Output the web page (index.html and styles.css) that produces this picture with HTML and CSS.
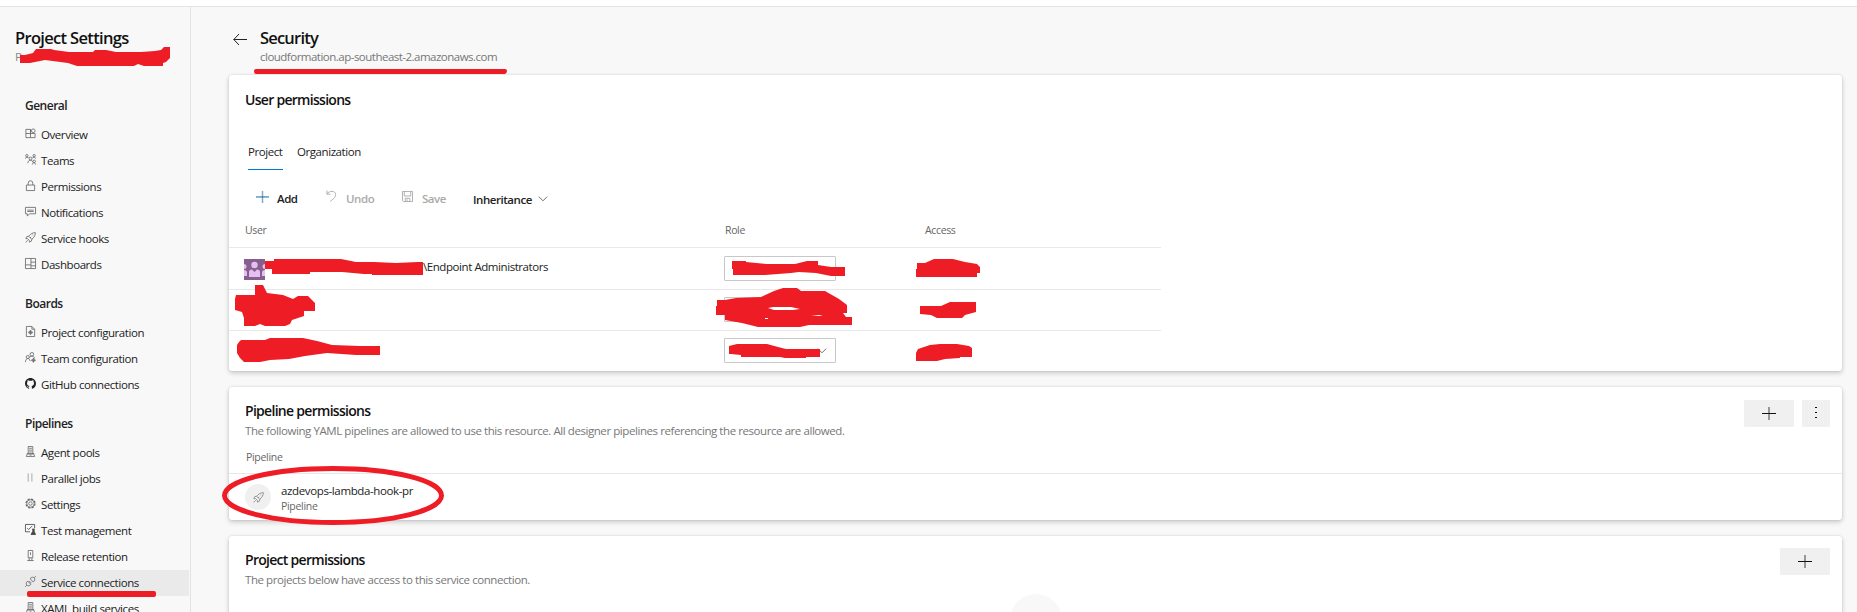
FILE: index.html
```html
<!DOCTYPE html>
<html lang="en">
<head>
<meta charset="utf-8">
<title>Security - Project Settings</title>
<link rel="stylesheet" href="styles.css">
</head>
<body>
<svg class="defs" width="0" height="0">
  <symbol id="i-rocket" viewBox="0 0 12 12"><path d="M11.300.700C8.500.700 6.300 1.900 4 4.600L1.900 5 .9 7.200l2 .1 1.800 1.800.1 2L7 10l.4-2.100C10.100 5.700 11.300 3.500 11.300.700zM3 9l-2.300 2.300M4 4.600 7.400 8M8.200 3l.8.8M5.500 6.500l1.200-1.200"/></symbol>
  <symbol id="i-server" viewBox="0 0 12 12"><path d="M3.500 8.500v-8h5v8M4.500 2.500h3M4.500 4.500h3M4.500 6.500h3M2 8.500h8M1.500 11.500l1-3h7l1 3zM5 10h2"/></symbol>
  <symbol id="i-plus" viewBox="0 0 14 14"><path d="M0 7.500h14"/><path opacity=".5" stroke-width="1.600" d="M7 1v13"/></symbol>
</svg>
<div class="page">
  <div class="topbar"></div>
  <div class="shell">
    <nav class="side">
      <div class="side-title">Project Settings</div>
      <div class="side-sub">P</div>
      <h3>General</h3>
      <a><svg class="ic" viewBox="0 0 12 12"><path d="M1 1.500h5v9H1zM1 6h10v4.500H6M6 1.500v4.500"/><circle cx="9" cy="3" r="2"/></svg><span>Overview</span></a>
      <a><svg class="ic" viewBox="0 0 12 12"><circle cx="2" cy="1.800" r="1.300"/><circle cx="10" cy="1.800" r="1.300"/><circle cx="6" cy="5" r="1.600"/><circle cx="10" cy="8" r="1.400"/><path d="M.5 5c0-2 3-2 3.500-.5M8 4.500C8.500 3 11.500 3 11.500 5M3 10c0-4 5-4 5.500-1M8 11.500c0-2.500 3.500-2.500 3.500 0"/></svg><span>Teams</span></a>
      <a><svg class="ic" viewBox="0 0 12 12"><path d="M1.500 5.500h9v6h-9zM3.500 5.500v-2a2.500 2.700 0 0 1 5 0v2"/></svg><span>Permissions</span></a>
      <a><svg class="ic" viewBox="0 0 12 12"><path d="M.5 1.500h11v7H5l-2.500 2.500v-2.500h-2zM2.500 4.500h7M2.500 6h7"/></svg><span>Notifications</span></a>
      <a><svg class="ic"><use href="#i-rocket"/></svg><span>Service hooks</span></a>
      <a><svg class="ic" viewBox="0 0 12 12"><path d="M.5.5h11v11H.5zM6.500.5v11M.5 7.500h6M6.500 4.500h5M6.500 8.500h5"/></svg><span>Dashboards</span></a>
      <h3>Boards</h3>
      <a><svg class="ic" viewBox="0 0 12 12"><path d="M1.500.5h6l3 3v8h-9zM7.500.5v3h3"/><circle cx="6" cy="7" r="1.700"/><path d="M6 4.500v5M3.500 7h5"/></svg><span>Project configuration</span></a>
      <a><svg class="ic" viewBox="0 0 12 12"><circle cx="7.500" cy="2.500" r="2"/><circle cx="3" cy="5.500" r="1.700"/><circle cx="9.200" cy="9" r="1.500"/><path d="M.5 11c0-5 5-5 5-1M4.500 6c2-2 5.500-2 6 1M9.200 6.500v5M6.700 9h5"/></svg><span>Team configuration</span></a>
      <a><svg class="ic gh" viewBox="0 0 16 16"><path d="M8 0C3.580 0 0 3.580 0 8c0 3.540 2.290 6.530 5.470 7.590.4.070.550-.170.550-.380 0-.190-.010-.820-.010-1.490-2.010.370-2.530-.490-2.690-.940-.090-.230-.480-.940-.820-1.130-.280-.150-.680-.520-.010-.530.630-.010 1.080.580 1.230.820.720 1.210 1.870.870 2.330.660.070-.520.280-.870.510-1.070-1.780-.200-3.640-.890-3.640-3.950 0-.870.310-1.590.820-2.150-.080-.200-.360-1.020.080-2.120 0 0 .670-.210 2.200.820a7.400 7.400 0 0 1 4 0c1.530-1.040 2.200-.820 2.200-.820.440 1.100.160 1.920.080 2.120.510.560.820 1.270.820 2.150 0 3.070-1.870 3.750-3.650 3.950.290.250.540.730.540 1.480 0 1.070-.010 1.930-.010 2.200 0 .210.150.460.550.380A8 8 0 0 0 16 8c0-4.420-3.580-8-8-8z"/></svg><span>GitHub connections</span></a>
      <h3>Pipelines</h3>
      <a><svg class="ic"><use href="#i-server"/></svg><span>Agent pools</span></a>
      <a><svg class="ic bars" viewBox="0 0 12 12"><path d="M3.500 1.500v9M7.500 1.500v9"/></svg><span>Parallel jobs</span></a>
      <a><svg class="ic" viewBox="0 0 12 12"><circle cx="6" cy="6" r="4.900" stroke-dasharray="2.400 1.450" stroke-width="1.300"/><circle cx="6" cy="6" r="4.100"/><circle cx="6" cy="6" r="1.900"/></svg><span>Settings</span></a>
      <a><svg class="ic dark" viewBox="0 0 12 12"><path d="M5.500 8.500h-5v-8h10v4M2.500 4.500l1.500 1.500 4-4"/><path fill="#444" d="M8 5.500h2.500M8.500 5.500v2.500L6.500 11.500h5L10 8V5.500"/></svg><span>Test management</span></a>
      <a><svg class="ic" viewBox="0 0 12 12"><path d="M3.500.5h5v8h-5zM6 2.500v3M2.500 11.500h7M4.500 8.500v3M7.500 8.500v3"/></svg><span>Release retention</span></a>
      <a class="on"><svg class="ic" viewBox="0 0 12 12"><path d="M.2 11.800 2 10M10 2l1.800-1.800M3 5.500 6.500 9C5 11 3.200 11 2 10 1 8.800 1 7 3 5.500zM5.500 3 9 6.500C11 5 11 3.200 10 2 8.800 1 7 1 5.500 3zM4.300 6.800 5.700 5.400M5.500 8 7 6.500"/></svg><span>Service connections</span></a>
      <a><svg class="ic"><use href="#i-server"/></svg><span>XAML build services</span></a>
    </nav>
    <main>
      <header>
        <svg class="back" viewBox="0 0 14 12"><path d="M.8 6.500H14M6 1 .8 6.500 6 12"/></svg>
        <div>
          <h1>Security</h1>
          <p class="url">cloudformation.ap-southeast-2.amazonaws.com</p>
        </div>
      </header>

      <section class="card users">
        <h2>User permissions</h2>
        <div class="tabs"><span class="tab sel">Project</span><span class="tab">Organization</span></div>
        <div class="tools">
          <svg class="add-ic"><use href="#i-plus"/></svg><b class="add">Add</b>
          <svg class="undo-ic" viewBox="0 0 12 13"><path d="M1 .5v4h4M1 4C4 .5 10 .5 10.500 4.500 10.800 8 7.500 10 4.500 12.500"/></svg><b class="undo">Undo</b>
          <svg class="save-ic" viewBox="0 0 12 12"><path d="M.5.5h11v11H1.500L.5 10.500zM2.500.5v5h7v-5M3.500 11.500V8h5v3.500M5.500 9v2"/></svg><b class="save">Save</b>
          <b class="inh">Inheritance</b><svg class="chev" viewBox="0 0 11 7"><path d="M.7.800 5.500 5.600 10.300.8"/></svg>
        </div>
        <div class="grid head"><span>User</span><span>Role</span><span>Access</span></div>
        <div class="grid row">
          <span class="who"><svg class="avatar" viewBox="0 0 21 21"><path fill="#865f8e" d="M0 0h21v21H0z"/><g fill="#e5bff0"><circle cx="10.500" cy="6" r="3.200"/><path d="M5 18v-5q0-2.500 3-2.500l2.500 2.500 2.500-2.500q3 0 3 2.500v5z"/><circle cx="0" cy="7.500" r="2.500"/><circle cx="21" cy="7.500" r="2.500"/><path d="M0 11q3 0 3 2.500V17H0zM21 11q-3 0-3 2.500V17h3z"/></g></svg><span class="name">\Endpoint Administrators</span></span>
          <span class="select"></span>
        </div>
        <div class="grid row"><span></span><span class="select"></span></div>
        <div class="grid row"><span></span><span class="select"><svg class="chev" viewBox="0 0 11 7"><path d="M.7.800 5.500 5.600 10.300.8"/></svg></span></div>
      </section>

      <section class="card pipes">
        <div class="cardhead">
          <div><h2>Pipeline permissions</h2>
          <p class="desc">The following YAML pipelines are allowed to use this resource. All designer pipelines referencing the resource are allowed.</p></div>
          <div class="btns"><span class="btn"><svg><use href="#i-plus"/></svg></span><span class="btn more"><svg viewBox="0 0 2 12"><path d="M0 1.500h2M0 6.500h2M0 11.500h2"/></svg></span></div>
        </div>
        <div class="colhead">Pipeline</div>
        <div class="item">
          <span class="disc"><svg><use href="#i-rocket"/></svg></span>
          <div><div class="iname">azdevops-lambda-hook-pr</div><div class="itype">Pipeline</div></div>
        </div>
      </section>

      <section class="card projects">
        <div class="cardhead">
          <div><h2>Project permissions</h2>
          <p class="desc">The projects below have access to this service connection.</p></div>
          <div class="btns"><span class="btn"><svg><use href="#i-plus"/></svg></span></div>
        </div>
        <div class="blank"></div>
      </section>
    </main>
  </div>
  <svg class="marks" viewBox="0 0 1857 612">
    <path d="M20 55h5l8-2 3-4h15l3 1 15 2h24l2-2h11l10 2h25l14-1 6-1 3-3h6v11l-4 4-3 1v3h-19l-6-2-4 2H77l-9-3-23-3-15 3H20z"/>
    <path d="M27 593q0-2 2-2h125q2 0 2 2v2q0 2-2 2H29q-2 0-2-2z"/>
    <path d="M254 71q0-2 2-2h249q2 0 2 2t-2 3H256q-2 0-2-3z"/>
    <path d="M265 261h9v-2h67l15 3h18l22 1 22-1h5v13h-51v-1h-8l-22-2h-32v2h-38v-5h-7z"/>
    <path d="M255 285h8l4 8 16 2 10 4 5-3h10l7 7v8h-11v5l-12 4-2 4-5 2h-20l-5-2-5 2h-11v-8l-2-6-7-2v-11l1-4h19z"/>
    <path d="M241 340h24l5-2h33l14 3 15 4 28 1h20v9h-24l-29-2-22 3-16 3-19 1-10 2h-16l-4-4-3-5v-8l2-3z"/>
    <path d="M732 261h14v1l20 2h29l12-3h11v4l13 2h14v9h-14l-15-3-17-1-8 1-26 2h-32v-6h-1z"/>
    <path fill-rule="evenodd" d="M717 300h8l11-2 25-1 13-6 9-3h14l4 3h24l14 8 8 6v8h-4l3 4h6v8h-43l-9 2h-42l-16-4-17-3v-5h-9v-9h1zM768 308l6 2h19l7-1-9-2h-18zM811 316h12l-4-1zM765 318h3v1h-3z"/>
    <path d="M729 346l8-2h30l11 3 8 2h34v8h-14v1h-21l-5-1h-39v-2l-10-1h-2z"/>
    <path d="M917 263h8l9-4h19l12 3 12 2 3 3v6h-3v4h-61v-8h1z"/>
    <path d="M920 306h21l9-4h26v10l-11 3-3 3h-25l-6-3-11-1z"/>
    <path d="M918 349l12-4 10-1h17l12 2 3 2v9h-12v1l-15 1-8 2h-21v-8z"/>
    <ellipse class="ring" cx="333" cy="495.500" rx="108.500" ry="27"/>
  </svg>
</div>
</body>
</html>
```
FILE: styles.css
```css
* { box-sizing: border-box; }
body { margin: 0; font-family: "Open Sans", "Noto Sans", sans-serif; font-size: 11.5px; letter-spacing: -.43px; color: #222; background: #f8f8f8; }
h1, h2, h3, p { margin: 0; }
svg { fill: none; stroke: #555; stroke-width: 1; flex: none; display: block; }
.defs { position: absolute; }
.page { position: relative; width: 1857px; height: 612px; overflow: hidden; }
.topbar { height: 7px; background: #fff; border-bottom: 1px solid #e4e4e4; }
.shell { display: flex; height: 605px; }

.side { width: 191px; flex: none; border-right: 1px solid #e2e2e2; padding-top: 18px; white-space: nowrap; }
.side-title { height: 26px; line-height: 26px; padding-left: 15px; font-size: 16.5px; font-weight: 600; letter-spacing: -.67px; color: #111; }
.side-sub { height: 29px; line-height: 11px; padding-left: 15px; color: #888; }
.side h3 { height: 42px; line-height: 51px; padding-left: 25px; font-size: 12px; font-weight: 600; letter-spacing: -.5px; color: #222; }
.side a { display: flex; height: 26px; line-height: 26px; padding-left: 25px; gap: 5px; width: 189px; }
.side a.on { background: #eaeaea; }
.ic { width: 11px; height: 11px; margin-top: 6px; overflow: visible; stroke: #666; stroke-width: .9; }
.ic.gh { fill: #222; stroke: none; }
.ic.bars { stroke: #999; }
.ic.dark { stroke: #444; }

main { flex: 1; padding: 18px 15px 0 38px; }
header { display: flex; height: 50px; padding-left: 4px; gap: 13px; }
.back { width: 14px; height: 12px; margin-top: 8px; stroke: #222; overflow: visible; }
h1 { font-size: 16.5px; line-height: 26px; height: 26px; font-weight: 600; letter-spacing: -.8px; color: #111; }
.url { line-height: 11px; color: #777; letter-spacing: -.51px; }

.card { background: #fff; border-radius: 3px; box-shadow: 0 2px 5px rgba(0,0,0,.2), 0 0 2px rgba(0,0,0,.12); white-space: nowrap; }
h2 { font-size: 14px; font-weight: 600; color: #111; letter-spacing: -.71px; line-height: 20px; }
.users { height: 296px; padding-top: 15px; }
.users h2 { padding-left: 16px; }
.tabs { display: flex; gap: 14px; margin: 30px 0 0 19px; height: 30px; }
.tab { line-height: 24px; height: 30px; }
.tab.sel { width: 35px; border-bottom: 1px solid #0078d4; }
.tools { display: flex; padding-left: 27px; height: 44px; padding-top: 16px; line-height: 25px; }
.tools b { font-weight: 600; letter-spacing: -.45px; }
.tools svg { overflow: visible; }
.add-ic { width: 13px; height: 13px; stroke: #005a9e; margin: 4px 8px 0 0; }
.add { width: 49px; }
.undo-ic { width: 11px; height: 12px; margin: 4px 9px 0 0; }
.save-ic { width: 11px; height: 11px; margin: 5px 9px 0 0; }
.undo { width: 56px; }
.save { width: 51px; }
.tools .undo, .tools .save { color: #aaa; }
.undo-ic, .save-ic { stroke: #aaa; }
.inh { width: 65px; padding-top: 1px; }
.chev { width: 10px; height: 6px; stroke: #555; }
.tools .chev { margin-top: 10px; }
.grid { display: grid; grid-template-columns: 480px 200px 1fr; width: 932px; padding-left: 15px; }
.head { height: 34px; line-height: 32px; font-size: 10.5px; color: #666; border-bottom: 1px solid #e8e8e8; padding-left: 16px; letter-spacing: -.35px; }
.row { height: 42px; border-bottom: 1px solid #e8e8e8; padding-top: 8px; }
.row + .row { height: 41px; padding-top: 7px; }
.row:last-child { border-bottom: 0; }
.who { display: flex; }
.avatar { width: 21px; height: 21px; margin-top: 3px; stroke: none; }
.name { padding-left: 158px; line-height: 21px; }
.select { width: 112px; height: 25px; border: 1px solid #c8c8c8; border-radius: 1px; padding: 9px 8px 0 0; display: flex; justify-content: flex-end; }

.cardhead { display: flex; justify-content: space-between; padding: 13px 12px 0 16px; }
.pipes { margin-top: 16px; height: 133px; }
.pipes .cardhead { height: 60px; }
.pipes h2, .projects h2 { margin-top: 1px; }
.projects h2 { padding-top: 1px; }
.desc { color: #777; line-height: 20px; }
.btns { display: flex; gap: 8px; }
.btn { width: 50px; height: 27px; background: #f0f0f0; border-radius: 1px; padding: 6px 0 0 18px; }
.btn svg { width: 14px; height: 14px; stroke: #111; }
.btn.more { width: 28px; padding: 6px 0 0 13px; }
.btn.more svg { width: 2px; height: 12px; }
.colhead { height: 27px; line-height: 20px; padding-left: 17px; font-size: 10.5px; color: #666; letter-spacing: -.3px; border-bottom: 1px solid #e8e8e8; }
.item { display: flex; padding: 10px 0 0 16px; gap: 10px; }
.disc { width: 26px; height: 26px; border-radius: 50%; background: #f0f0f0; padding: 8px; }
.disc svg { width: 11px; height: 11px; stroke: #777; stroke-width: .8; }
.iname { line-height: 17px; margin-top: -2px; letter-spacing: -.37px; }
.itype { font-size: 10.5px; line-height: 14px; color: #666; letter-spacing: -.3px; }
.projects { margin-top: 16px; height: 150px; }
.projects .cardhead { height: 58px; padding-top: 12px; }
.blank { width: 52px; height: 52px; border-radius: 50%; background: #f8f8f8; margin: 0 auto; }

.marks { position: absolute; left: 0; top: 0; width: 1857px; height: 612px; fill: #ee1c24; stroke: none; pointer-events: none; }
.marks .ring { fill: none; stroke: #ee1c24; stroke-width: 5; }
```
